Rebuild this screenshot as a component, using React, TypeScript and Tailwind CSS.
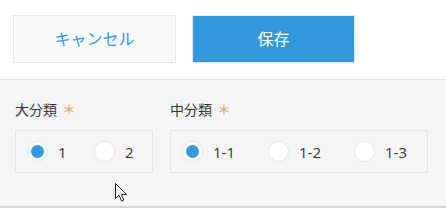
import React from "react";

function Radio({ checked, label }: { checked?: boolean; label: string }) {
  return (
    <div className="flex items-center">
      <span className="flex h-[21px] w-[21px] items-center justify-center rounded-full border border-[#e3e7e8] bg-white">
        {checked && <span className="h-[13px] w-[13px] rounded-full bg-[#3498db]" />}
      </span>
      <span className="ml-[10px] text-[15px] leading-[20px] text-[#333333]">{label}</span>
    </div>
  );
}

export default function App() {
  return (
    <div
      className="relative h-[208px] w-[446px] overflow-hidden bg-white"
      style={{ fontFamily: '"Open Sans", "Noto Sans CJK JP", sans-serif' }}
    >
      <div className="flex h-[79px] gap-[16px] bg-white pl-[13px] pt-[15px]">
        <button className="flex h-[48px] w-[163px] items-center justify-center border border-[#e3e7e8] bg-[#f7f9fa] text-[16px] text-[#3498db]">
          キャンセル
        </button>
        <button className="flex h-[48px] w-[163px] items-center justify-center border border-[#e3e7e8] bg-[#3498db] text-[16px] text-white">
          保存
        </button>
      </div>
      <div className="h-[1px] bg-[#e3e3e3]" />
      <div className="flex h-[126px] gap-[17px] bg-[#f5f5f5] pl-[15px] pt-[20px]">
        <div className="flex flex-col">
          <div className="flex h-[20px] items-center text-[14px] leading-[20px] text-[#333333]">
            大分類
            <span
              className="ml-[5px] -mt-[4px] text-[14px] text-[#e8a464]"
              style={{ fontFamily: '"Noto Sans CJK JP", sans-serif' }}
            >
              ＊
            </span>
          </div>
          <div className="mt-[10px] flex h-[43px] w-[138px] items-center border border-[#e3e3e3] pl-[11px]">
            <div className="w-[67px]">
              <Radio checked label="1" />
            </div>
            <Radio label="2" />
          </div>
        </div>
        <div className="flex flex-col">
          <div className="flex h-[20px] items-center text-[14px] leading-[20px] text-[#333333]">
            中分類
            <span
              className="ml-[5px] -mt-[4px] text-[14px] text-[#e8a464]"
              style={{ fontFamily: '"Noto Sans CJK JP", sans-serif' }}
            >
              ＊
            </span>
          </div>
          <div className="mt-[10px] flex h-[43px] w-[258px] items-center border border-[#e3e3e3] pl-[11px]">
            <div className="w-[86px]">
              <Radio checked label="1-1" />
            </div>
            <div className="w-[86px]">
              <Radio label="1-2" />
            </div>
            <Radio label="1-3" />
          </div>
        </div>
      </div>
      <div className="h-[2px] bg-[#d6d6d6]" />
      <svg
        className="absolute left-[115px] top-[183px]"
        width="13"
        height="19"
        viewBox="0 0 13 19"
      >
        <path
          d="M0.5 0.5 L0.5 15.5 L4 12.2 L6.6 18 L8.8 17 L6.3 11.4 L11.5 11.4 Z"
          fill="white"
          stroke="#222"
          strokeWidth="1"
          strokeLinejoin="round"
        />
      </svg>
    </div>
  );
}
